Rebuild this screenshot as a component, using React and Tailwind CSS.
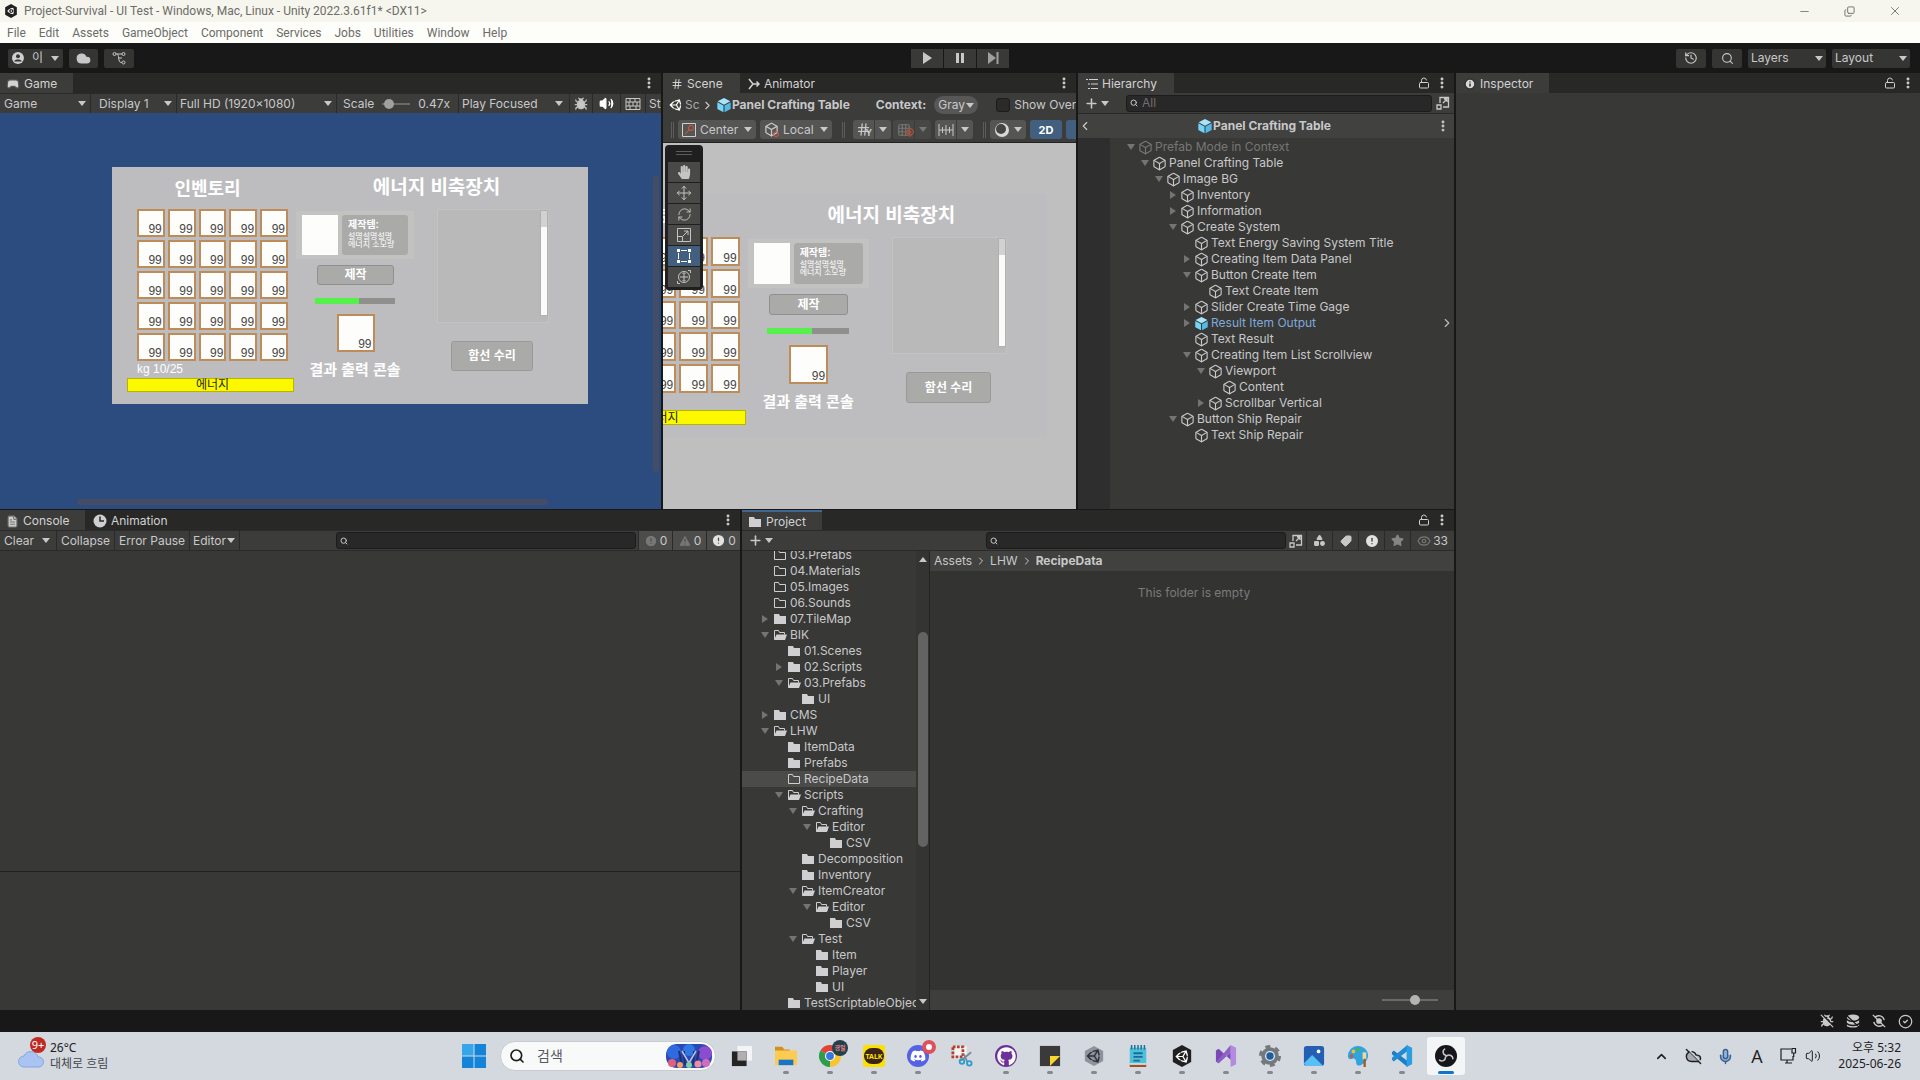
import {
  Box, Bug, BugOff, ChevronLeft, ChevronRight, ChevronUp, CircleAlert, CircleCheck, Cloud, CloudOff, Copy,
  EllipsisVertical, Eye, FileText, Gamepad2, Grid3x3, Hash, History, Info, LockOpen, Mic, Minus,
  Move, Plus, RefreshCw, Search, Shapes, Star, Tag, TriangleAlert, Volume2, X, Magnet,
} from 'lucide-react'
import { FaDiscord, FaGithub, FaHandPaper, FaUnity } from 'react-icons/fa'

const HIERARCHY = [
  [0, 'open', 'Prefab Mode in Context', 'dim'],
  [1, 'open', 'Panel Crafting Table'],
  [2, 'open', 'Image BG'],
  [3, 'closed', 'Inventory'],
  [3, 'closed', 'Information'],
  [3, 'open', 'Create System'],
  [4, '', 'Text Energy Saving System Title'],
  [4, 'closed', 'Creating Item Data Panel'],
  [4, 'open', 'Button Create Item'],
  [5, '', 'Text Create Item'],
  [4, 'closed', 'Slider Create Time Gage'],
  [4, 'closed', 'Result Item Output', 'prefab'],
  [4, '', 'Text Result'],
  [4, 'open', 'Creating Item List Scrollview'],
  [5, 'open', 'Viewport'],
  [6, '', 'Content'],
  [5, 'closed', 'Scrollbar Vertical'],
  [3, 'open', 'Button Ship Repair'],
  [4, '', 'Text Ship Repair'],
]

// [depth, arrow, folder kind, name]
const FOLDERS = [
  [0, '', 'empty', '03.Prefabs'],
  [0, '', 'empty', '04.Materials'],
  [0, '', 'empty', '05.Images'],
  [0, '', 'empty', '06.Sounds'],
  [0, 'closed', 'full', '07.TileMap'],
  [0, 'open', 'open', 'BIK'],
  [1, '', 'full', '01.Scenes'],
  [1, 'closed', 'full', '02.Scripts'],
  [1, 'open', 'open', '03.Prefabs'],
  [2, '', 'full', 'UI'],
  [0, 'closed', 'full', 'CMS'],
  [0, 'open', 'open', 'LHW'],
  [1, '', 'full', 'ItemData'],
  [1, '', 'full', 'Prefabs'],
  [1, '', 'empty', 'RecipeData'],
  [1, 'open', 'open', 'Scripts'],
  [2, 'open', 'open', 'Crafting'],
  [3, 'open', 'open', 'Editor'],
  [4, '', 'full', 'CSV'],
  [2, '', 'full', 'Decomposition'],
  [2, '', 'full', 'Inventory'],
  [2, 'open', 'open', 'ItemCreator'],
  [3, 'open', 'open', 'Editor'],
  [4, '', 'full', 'CSV'],
  [2, 'open', 'open', 'Test'],
  [3, '', 'full', 'Item'],
  [3, '', 'full', 'Player'],
  [3, '', 'full', 'UI'],
  [1, '', 'full', 'TestScriptableObjects'],
]

const MENUS = ['File', 'Edit', 'Assets', 'GameObject', 'Component', 'Services', 'Jobs', 'Utilities', 'Window', 'Help']

function Caret({ className = '' }) {
  return (
    <svg viewBox="0 0 8 5" className={`pointer-events-none h-[5px] w-2 shrink-0 ${className}`} fill="currentColor" aria-hidden>
      <path d="M0 0h8L4 5z" />
    </svg>
  )
}

function Dropdown({ label, value, className = '' }) {
  return (
    <label className={`flex h-full items-center ${className}`}>
      <select aria-label={label} className="min-w-0 flex-1 appearance-none bg-transparent p-0 outline-none">
        <option>{value}</option>
      </select>
      <Caret />
    </label>
  )
}

function Tab({ icon, children, active, className = '' }) {
  return (
    <button className={`flex h-full items-center gap-1 pt-0.5 whitespace-nowrap ${active ? 'bg-[#3c3c3a]' : ''} ${className}`}>
      {icon}
      {children}
    </button>
  )
}

function TabBar({ lock, children }) {
  return (
    <div className="flex h-5 shrink-0 items-center bg-[#282827] text-[#d2d2d2]">
      {children}
      <span className="flex-1" />
      {lock && (
        <button aria-label="Lock" className="mr-0.5 flex w-4 justify-center">
          <LockOpen size={12} />
        </button>
      )}
      <button aria-label="More" className="mr-1 flex w-4 justify-center">
        <EllipsisVertical size={14} strokeWidth={3} />
      </button>
    </div>
  )
}

function Arrow({ state }) {
  if (!state) return <span className="w-3 shrink-0" />
  return (
    <button aria-label={state === 'open' ? 'Collapse' : 'Expand'} className="flex w-3 shrink-0 justify-center text-[#747474]">
      <svg viewBox="0 0 8 8" className="size-2" fill="currentColor">
        <path d={state === 'open' ? 'M0 1h8L4 7z' : 'M1 0v8l6-4z'} />
      </svg>
    </button>
  )
}

function Cube({ solid, className = 'size-4' }) {
  if (!solid) return <Box className={`shrink-0 ${className}`} strokeWidth={1.8} />
  return (
    <svg viewBox="0 0 24 24" className={`shrink-0 ${className}`}>
      <path d="M12 1.500 21.500 6.500 12 11.500 2.500 6.500z" fill="#a5e6fb" />
      <path d="M2 8l9.200 4.800v10L2 18z" fill="#74d3f7" />
      <path d="M22 8l-9.200 4.800v10L22 18z" fill="#55b9e6" />
    </svg>
  )
}

function FolderIcon({ kind }) {
  return (
    <svg viewBox="0 0 14 12" className="h-3 w-3.5 shrink-0">
      {kind === 'full' && <path d="M1 1h5l1 2h6v8H1z" fill="#cfcfd2" />}
      {kind === 'empty' && <path d="M1.500 10.500v-9h4l1 2h6v7z" fill="none" stroke="#cfcfd2" />}
      {kind === 'open' && (
        <>
          <path d="M1.500 10.500v-9h4l1 2h5v2" fill="none" stroke="#cfcfd2" />
          <path d="M3.500 5.500H14L12 11H1z" fill="#cfcfd2" />
        </>
      )}
    </svg>
  )
}

function SearchField({ label, placeholder, className = '' }) {
  return (
    <label className={`flex h-[17px] items-center gap-1 rounded-[3px] border border-[#1c1c1c] bg-[#282828] px-[3px] ${className}`}>
      <Search size={8} strokeWidth={3} className="shrink-0" />
      <input aria-label={label} placeholder={placeholder} className="min-w-0 flex-1 bg-transparent outline-none placeholder:text-[#6f6f6f]" />
    </label>
  )
}

/* ---------- in-game crafting UI, shown by both Game and Scene views ---------- */

function Slot() {
  return (
    <div className="flex min-h-0 items-end justify-end overflow-hidden border-2 border-[#bd8c58] bg-[#fdfdfb] pr-px text-xs leading-3 text-[#484848]">
      99
    </div>
  )
}

function CraftingPanel({ className = '' }) {
  return (
    <div
      className={`grid grid-cols-[15fr_167fr_2fr_118fr_23fr_112fr_39fr] grid-rows-[42fr_195fr] font-['Liberation_Sans','Noto_Sans_CJK_KR',sans-serif] text-white ${className}`}
    >
      <h2 className="col-start-2 flex min-h-0 items-center justify-center pt-0.5 pr-1.5 text-lg leading-5 font-bold">인벤토리</h2>
      <h2 className="col-start-4 col-end-7 flex min-h-0 items-center justify-center pl-7 text-[19px] leading-5 font-bold">에너지 비축장치</h2>

      <div className="col-start-2 row-start-2 grid min-h-0 grid-rows-[152fr_17fr_14fr_12fr]">
        <div className="mr-1.5 ml-2.5 grid min-h-0 grid-cols-5 grid-rows-5 gap-x-[3px] gap-y-[3px]">
          {Array.from({ length: 25 }, (_, i) => <Slot key={i} />)}
        </div>
        <p className="ml-2.5 min-h-0 text-xs leading-4">kg 10/25</p>
        <div className="flex min-h-0 items-center justify-center border border-[#b9b400] bg-[#fbf800] pl-1 text-xs leading-3 text-[#26261a]">
          에너지
        </div>
      </div>

      <div className="col-start-4 row-start-2 grid min-h-0 grid-cols-[18fr_4fr_15fr_60fr_2fr_19fr] grid-rows-[2fr_48fr_6fr_20fr_13fr_6fr_10fr_38fr_8fr_20fr_24fr]">
        <div className="col-span-6 row-start-2 flex min-h-0 gap-1 bg-[#c2c2c1] px-1.5 py-1">
          <div className="w-9 bg-[#fdfdfb]" />
          <div className="flex-1 overflow-hidden rounded-[3px] bg-[#aaaaa8] px-1.5 pt-1">
            <p className="text-[10px] leading-3 font-bold">제작템:</p>
            <p className="mt-0.5 text-[8px] leading-[8px]">설명설명설명</p>
            <p className="text-[8px] leading-[8px] whitespace-nowrap">에너지 소모량</p>
          </div>
        </div>
        <button className="col-start-2 col-end-6 row-start-4 mr-px ml-[3px] min-h-0 rounded-[3px] border border-[#8f8f8d] bg-[#aaaaa8] text-xs leading-4 font-bold">
          제작
        </button>
        <div className="col-start-2 col-end-6 row-start-6 ml-px min-h-0 bg-[#8f8f8d]">
          <div className="h-full w-[55%] bg-[#55f04c]" />
        </div>
        <div className="col-start-3 col-end-5 row-start-8 mx-auto grid aspect-square h-full min-h-0">
          <Slot />
        </div>
        <p className="col-span-6 row-start-10 min-h-0 text-center text-[15px] leading-5 font-bold">결과 출력 콘솔</p>
      </div>

      <div className="col-start-6 row-start-2 grid min-h-0 grid-rows-[114fr_18fr_30fr_33fr]">
        <div className="flex min-h-0 justify-end border border-[#c3c3c2] bg-[#b9b9ba]">
          <div className="mb-1.5 flex w-2 flex-col border border-[#b0b0ae] bg-[#d2d2d2]">
            <div className="mt-4 flex-1 bg-[#fbfbf9]" />
          </div>
        </div>
        <button className="row-start-3 mr-4 ml-3.5 min-h-0 rounded-[3px] border border-[#999997] bg-[#aaaaa8] text-xs leading-4 font-bold">
          함선 수리
        </button>
      </div>
    </div>
  )
}

/* ---------- editor windows ---------- */

function GameWindow() {
  return (
    <section className="flex min-h-0 min-w-0 flex-col overflow-hidden bg-[#3c3c3a]">
      <TabBar>
        <Tab active icon={<Gamepad2 size={14} fill="currentColor" stroke="#555" />} className="w-[73px] px-1.5">Game</Tab>
      </TabBar>
      <div className="flex h-5 shrink-0 items-center border-t border-[#2a2a2a] whitespace-nowrap *:shrink-0">
        <Dropdown label="View" value="Game" className="w-[91px] border-r border-[#2a2a2a] pr-1 pl-1" />
        <Dropdown label="Display" value="Display 1" className="w-[86px] border-r border-[#2a2a2a] pr-1 pl-2" />
        <Dropdown label="Resolution" value="Full HD (1920x1080)" className="w-40 border-r border-[#2a2a2a] pr-1 pl-[3px]" />
        <label className="flex h-full w-[122px] items-center gap-2 border-r border-[#2a2a2a] pl-1.5">
          Scale
          <input
            type="range"
            defaultValue={8}
            className="h-0.5 w-7 appearance-none bg-[#6a6a6a] [&::-webkit-slider-thumb]:size-2.5 [&::-webkit-slider-thumb]:appearance-none [&::-webkit-slider-thumb]:rounded-full [&::-webkit-slider-thumb]:bg-[#a0a0a0]"
          />
          <output>0.47x</output>
        </label>
        <Dropdown label="Play mode" value="Play Focused" className="w-[110px] pr-1.5 pl-[3px]" />
        <button aria-label="Debug" className="flex h-full w-6 items-center justify-center border-x border-[#2a2a2a]"><Bug size={14} fill="currentColor" stroke="#bdbdbd" /></button>
        <button aria-label="Mute" className="flex h-full w-7 items-center justify-center border-r border-[#2a2a2a]"><Volume2 size={15} fill="#fff" stroke="#fff" /></button>
        <button aria-label="Shortcuts" className="flex h-full w-6 items-center justify-center">
          <svg viewBox="0 0 16 12" className="h-3 w-4" fill="none" stroke="currentColor">
            <path d="M1 .5h14v11H1zM1 4h14M1 8h14M5 0v4M10 0v4M4 4v4M8 4v4M12 4v4M5 8v4M11 8v4" />
          </svg>
        </button>
        <button className="h-full border-l border-[#2a2a2a] pl-[3px]">Stats</button>
      </div>
      <div className="relative min-h-0 flex-1 overflow-hidden bg-[#2c4c7f]">
        <CraftingPanel className="absolute top-[54px] left-28 h-[237px] w-[476px] bg-[#bdbdbf]" />
        <div className="absolute top-[62px] right-0.5 h-[297px] w-1.5 rounded-full bg-[#434d66]" />
        <div className="absolute bottom-1 left-[77px] h-1.5 w-[471px] rounded-full bg-[#434d66]" />
      </div>
    </section>
  )
}

const TOOLS = [
  ['Hand', <FaHandPaper size={14} />],
  ['Move', <Move size={16} strokeWidth={1.5} />],
  ['Rotate', <RefreshCw size={15} strokeWidth={1.5} />],
  ['Scale', (
    <svg viewBox="0 0 16 16" className="size-4" stroke="currentColor" fill="none">
      <path d="M1.500 1.500h13v13h-13zM1.500 9.500h5v5M7 9l5-5M8 4h4v4" />
    </svg>
  )],
  ['Rect', (
    <svg viewBox="0 0 16 16" className="size-4" stroke="currentColor" fill="#fff">
      <path d="M5 2.500h6M5 13.500h6M2.500 5v6M13.500 5v6" />
      <path d="M1 1h3v3H1zM12 1h3v3h-3zM1 12h3v3H1zM12 12h3v3h-3z" stroke="none" />
    </svg>
  )],
  ['Transform', (
    <svg viewBox="0 0 16 16" className="size-4" stroke="currentColor" fill="none">
      <circle cx="8" cy="8" r="5.500" />
      <path d="M8 4v8M4 8h8M6.500 5 8 3.500 9.500 5M6.500 11 8 12.500 9.500 11M12 1.500h2.500V4M4 14.500H1.500V12" />
    </svg>
  )],
]

function Grip() {
  return <span className="h-4 w-[3px] shrink-0 border-x border-[#5c5c5c]" />
}

function SceneWindow() {
  return (
    <section className="flex min-h-0 min-w-0 flex-col overflow-hidden bg-[#3c3c3a]">
      <TabBar>
        <Tab active icon={<Hash size={12} />} className="w-[77px] gap-1 px-2">Scene</Tab>
        <Tab
          icon={
            <svg viewBox="0 0 12 12" className="size-3" fill="none" stroke="currentColor" strokeWidth="1.500">
              <path d="M1 1l4 5-4 5M5 6h6M8.500 3.500 11 6 8.500 8.500" />
            </svg>
          }
          className="px-2"
        >
          Animator
        </Tab>
      </TabBar>
      <div className="flex h-6 shrink-0 items-center whitespace-nowrap *:shrink-0">
        <FaUnity size={14} className="ml-1.5 text-white" />
        <a href="#scene" className="ml-0.5 w-4 overflow-hidden text-[#a8a8a8]">Sc</a>
        <ChevronRight size={13} />
        <Cube solid className="ml-0.5 size-4" />
        <a href="#prefab" className="font-bold">Panel Crafting Table</a>
        <span className="ml-[26px] font-bold">Context:</span>
        <Dropdown label="Context" value="Gray" className="ml-2 max-h-[18px] w-11 rounded-full bg-[#575757] px-1" />
        <label className="ml-[18px] flex items-center gap-1">
          <input type="checkbox" className="size-3.5 appearance-none rounded-[3px] border border-[#1c1c1c] bg-[#2a2a2a]" />
          Show Overrides
        </label>
      </div>
      <div className="flex h-[26px] shrink-0 items-center overflow-hidden border-b border-[#222] pl-2 whitespace-nowrap *:shrink-0">
        <Grip />
        <label className="ml-1 flex h-[19px] w-[78px] items-center gap-1 rounded-[3px] bg-[#555553] px-1">
          <svg viewBox="0 0 14 14" className="size-3.5" fill="none" stroke="#d0d0d0">
            <path d="M.5.5h13v13H.5z" />
            <path d="M3 11l5-5" stroke="#d65a3c" />
            <circle cx="9" cy="5" r="2.500" stroke="#d65a3c" />
          </svg>
          <Dropdown label="Pivot" value="Center" className="flex-1" />
        </label>
        <label className="ml-1 flex h-[19px] w-[72px] items-center gap-1 rounded-[3px] bg-[#555553] px-1">
          <span className="relative">
            <Box size={15} />
            <span className="absolute right-0 bottom-0 size-1.5 rounded-full border border-[#d65a3c]" />
          </span>
          <Dropdown label="Handle rotation" value="Local" className="flex-1" />
        </label>
        <span className="w-2.5" />
        <Grip />
        <div className="ml-2 flex h-[19px] gap-px *:flex *:items-center *:justify-center *:bg-[#555553]">
          <button aria-label="Grid" className="relative w-[21px] rounded-l-[3px]">
            <Hash size={15} />
            <b className="absolute right-0.5 bottom-0 text-[9px] leading-3">Y</b>
          </button>
          <button aria-label="Grid options" className="w-4 rounded-r-[3px]"><Caret /></button>
        </div>
        <div className="ml-0.5 flex h-[19px] gap-px text-[#777] *:flex *:items-center *:justify-center *:bg-[#474745]">
          <button aria-label="Snap" className="relative w-[21px] rounded-l-[3px]">
            <Grid3x3 size={14} />
            <Magnet size={9} strokeWidth={3} className="absolute right-0 bottom-0.5 text-[#a4523c]" />
          </button>
          <button aria-label="Snap options" className="w-4 rounded-r-[3px]"><Caret /></button>
        </div>
        <div className="ml-1 flex h-[19px] gap-px *:flex *:items-center *:justify-center *:bg-[#555553]">
          <button aria-label="Increment" className="w-[21px] rounded-l-[3px]">
            <svg viewBox="0 0 16 12" className="h-3 w-4" fill="none" stroke="currentColor">
              <path d="M1 0v12M15 0v12M1 6h14M4.500 3v6M8 1v10M11.500 3v6" />
            </svg>
          </button>
          <button aria-label="Increment options" className="w-4 rounded-r-[3px]"><Caret /></button>
        </div>
        <span className="w-2.5" />
        <Grip />
        <div className="ml-1 flex h-[19px] w-[36px] items-center justify-center gap-1 rounded-[3px] bg-[#555553]">
          <svg viewBox="0 0 16 16" className="size-4">
            <circle cx="8" cy="8" r="7" fill="#d8d8d8" />
            <circle cx="7" cy="7" r="5" fill="#444" />
          </svg>
          <Caret />
        </div>
        <button className="ml-1 h-[19px] w-8 rounded-[3px] bg-[#425f80] text-[11px] font-bold text-white">2D</button>
        <button aria-label="Lighting" className="ml-1 h-[19px] w-8 rounded-[3px] bg-[#425f80]" />
      </div>
      <div className="relative min-h-0 flex-1 overflow-hidden bg-[#bfbfbf]">
        <CraftingPanel className="absolute top-[51px] left-[-104px] h-[243px] w-[488px] bg-[#bdbdbf]" />
        <div className="absolute top-0.5 left-0.5 flex w-[38px] flex-col gap-px rounded-[4px] bg-[#1f1f1f] p-[3px] pt-0">
          <div className="mx-auto my-1.5 h-1 w-4 border-y border-[#5c5c5c]" />
          {TOOLS.map(([name, icon]) => (
            <button
              key={name}
              aria-label={name}
              className={`flex h-5 items-center justify-center ${name === 'Rect' ? 'bg-[#425f80] text-white' : 'bg-[#494947] text-[#c4c4c4]'}`}
            >
              {icon}
            </button>
          ))}
        </div>
      </div>
    </section>
  )
}

function ExpandIcon() {
  return (
    <svg viewBox="0 0 14 14" className="size-3.5 shrink-0" fill="none" stroke="currentColor" strokeWidth="1.300">
      <path d="M4 7V1.500h8.500V11H7M7 7l4-4M8 3h3v3M1 9h4v4H1z" />
    </svg>
  )
}

function HierarchyWindow() {
  return (
    <section className="flex min-h-0 min-w-0 flex-col overflow-hidden bg-[#383836]">
      <TabBar lock>
        <Tab
          active
          icon={
            <svg viewBox="0 0 12 12" className="size-3" stroke="currentColor" strokeWidth="1.200">
              <path d="M0 1.500h2M3 1.500h9M2 6h2M5 6h7M2 10.500h2M5 10.500h7" />
            </svg>
          }
          className="w-24 px-2"
        >
          Hierarchy
        </Tab>
      </TabBar>
      <div className="flex h-5 shrink-0 items-center bg-[#3c3c3a] pr-1">
        <button aria-label="Create" className="flex w-12 items-center gap-0.5 pl-1.5"><Plus size={15} strokeWidth={2.5} /><Caret /></button>
        <SearchField label="Search hierarchy" placeholder="All" className="mr-1 flex-1" />
        <ExpandIcon />
      </div>
      <div className="flex h-[25px] shrink-0 items-center border-t border-[#2a2a2a] bg-[#414140] pr-1">
        <button aria-label="Back"><ChevronLeft size={14} /></button>
        <div className="flex flex-1 items-center justify-center font-bold"><Cube solid />Panel Crafting Table</div>
        <button aria-label="Prefab options"><EllipsisVertical size={14} strokeWidth={3} /></button>
      </div>
      <div className="flex min-h-0 flex-1">
        <div className="w-8 bg-[#2e2e2e]" />
        <ul className="min-w-0 flex-1 pt-px pl-[15px]">
          {HIERARCHY.map(([depth, arrow, name, kind], i) => (
            <li
              key={i}
              className={`flex h-4 items-center whitespace-nowrap ${kind === 'dim' ? 'text-[#777776]' : kind === 'prefab' ? 'text-[#7faadb]' : ''}`}
              style={{ paddingLeft: depth * 14 }}
            >
              <Arrow state={arrow} />
              <Cube solid={kind === 'prefab'} className="mx-px size-[15px]" />
              <span className="ml-px">{name}</span>
              {kind === 'prefab' && <ChevronRight size={14} className="ml-auto text-[#bdbdbd]" />}
            </li>
          ))}
        </ul>
      </div>
    </section>
  )
}

function ConsoleWindow() {
  return (
    <section className="flex min-h-0 min-w-0 flex-col overflow-hidden bg-[#383836]">
      <TabBar>
        <Tab active icon={<FileText size={13} fill="#ccc" stroke="#777" />} className="w-[85px] px-1.5">Console</Tab>
        <Tab
          icon={
            <svg viewBox="0 0 14 14" className="size-3.5">
              <circle cx="7" cy="7" r="6.500" fill="#cfcfd2" />
              <path d="M7 2.500V7h4" fill="none" stroke="#282828" strokeWidth="1.500" />
            </svg>
          }
          className="px-2"
        >
          Animation
        </Tab>
      </TabBar>
      <div className="flex h-[21px] shrink-0 items-center border-y border-[#2a2a2a] bg-[#3c3c3a] whitespace-nowrap *:h-full">
        <Dropdown label="Clear" value="Clear" className="w-[57px] border-r border-[#2a2a2a] pr-1.5 pl-1" />
        <button className="w-[58px] border-r border-[#2a2a2a]">Collapse</button>
        <button className="w-[75px] border-r border-[#2a2a2a]">Error Pause</button>
        <Dropdown label="Target" value="Editor" className="w-[50px] border-r border-[#2a2a2a] pr-1 pl-[3px]" />
        <div className="flex flex-1 items-center justify-end pr-0.5">
          <SearchField label="Search console" className="w-[300px]" />
        </div>
        {[
          ['Logs', <CircleAlert size={14} fill="#777" stroke="#4c4c4a" />],
          ['Warnings', <TriangleAlert size={14} fill="#777" stroke="#4c4c4a" />],
          ['Errors', <CircleAlert size={15} fill="#e2e2e2" stroke="#4c4c4a" />],
        ].map(([name, icon]) => (
          <button key={name} aria-label={name} className="flex w-[34px] items-center justify-center gap-0.5 border-l border-[#2a2a2a] bg-[#4c4c4a]">
            {icon}0
          </button>
        ))}
      </div>
      <div className="flex-[320]" />
      <div className="flex-[138] border-t border-[#222]" />
    </section>
  )
}

function ProjectWindow() {
  return (
    <section className="flex min-h-0 min-w-0 flex-col overflow-hidden bg-[#383836]">
      <TabBar lock>
        <Tab active icon={<FolderIcon kind="full" />} className="w-20 border-t-2 border-[#3f6690] px-1.5">Project</Tab>
      </TabBar>
      <div className="flex h-[21px] shrink-0 items-center border-y border-[#2a2a2a] bg-[#3c3c3a] pr-1.5">
        <button aria-label="Create" className="flex w-12 items-center gap-0.5 pl-1.5"><Plus size={15} strokeWidth={2.5} /><Caret /></button>
        <span className="flex-1" />
        <SearchField label="Search project" className="w-[300px]" />
        <button aria-label="Open search" className="flex w-5 justify-center"><ExpandIcon /></button>
        <div className="flex h-full *:flex *:h-full *:w-[26px] *:items-center *:justify-center *:border-l *:border-[#2a2a2a]">
          <button aria-label="Filter by type"><Shapes size={13} fill="currentColor" /></button>
          <button aria-label="Filter by label"><Tag size={12} fill="currentColor" className="-scale-x-100" /></button>
          <button aria-label="Filter by log"><CircleAlert size={16} fill="#e2e2e2" stroke="#3c3c3a" /></button>
          <button aria-label="Favorites"><Star size={13} fill="#858585" stroke="#858585" /></button>
        </div>
        <button className="flex h-full items-center gap-0.5 border-l border-[#2a2a2a] pl-1.5"><Eye size={14} className="text-[#777]" />33</button>
      </div>
      <div className="flex min-h-0 flex-1">
        <div className="flex w-[188px] min-w-0 shrink-0 border-r border-[#222]">
          <div className="flex min-w-0 flex-1 flex-col justify-end overflow-hidden">
            <ul className="-mb-px">
              {FOLDERS.map(([depth, arrow, kind, name], i) => (
                <li
                  key={i}
                  className={`flex h-4 items-center whitespace-nowrap ${name === 'RecipeData' ? 'bg-[#4b4b49]' : ''}`}
                  style={{ paddingLeft: 17 + depth * 14 }}
                >
                  <Arrow state={arrow} />
                  <span className="mr-[3px] ml-0.5"><FolderIcon kind={kind} /></span>
                  {name}
                </li>
              ))}
            </ul>
          </div>
          <div className="flex w-[13px] flex-col items-center bg-[#343433] py-1.5">
            <Caret className="rotate-180" />
            <div className="flex-[70]" />
            <div className="w-2.5 flex-[216] rounded-full bg-[#636363]" />
            <div className="flex-[152]" />
            <Caret />
          </div>
        </div>
        <div className="flex min-w-0 flex-1 flex-col bg-[#333332]">
          <nav className="flex h-5 items-center gap-[3px] bg-[#41413f] px-1">
            <a href="#assets">Assets</a>
            <ChevronRight size={12} />
            <a href="#lhw">LHW</a>
            <ChevronRight size={12} />
            <a href="#recipe" className="font-bold">RecipeData</a>
          </nav>
          <p className="mt-3.5 flex-1 pl-1 text-center text-[#7b7b7a]">This folder is empty</p>
          <div className="flex h-5 items-center justify-end bg-[#3e3e3c] pr-4">
            <input
              type="range"
              aria-label="Icon size"
              defaultValue={60}
              className="h-0.5 w-[56px] appearance-none bg-[#6a6a6a] [&::-webkit-slider-thumb]:size-2.5 [&::-webkit-slider-thumb]:appearance-none [&::-webkit-slider-thumb]:rounded-full [&::-webkit-slider-thumb]:bg-[#b4b4b4]"
            />
          </div>
        </div>
      </div>
    </section>
  )
}

function InspectorWindow() {
  return (
    <section className="flex min-h-0 min-w-0 flex-col overflow-hidden bg-[#383836]">
      <TabBar lock>
        <Tab active icon={<Info size={12} fill="#d8d8d8" stroke="#333" strokeWidth={3} />} className="w-[93px] px-2">Inspector</Tab>
      </TabBar>
    </section>
  )
}

/* ---------- taskbar drawings ---------- */

const ICONS = {
  taskview: (
    <svg viewBox="0 0 24 24"><path d="M7 1h16v16H7z" fill="#f4f4f4" /><path d="M1 7h16v16H1z" fill="#242424" /><path d="M7 7h10v10H7z" fill="#b0b0b4" /></svg>
  ),
  folder: (
    <svg viewBox="0 0 24 24"><path d="M0 2h8l2 3h6v6H0z" fill="#d68f1c" /><path d="M0 6h24v16H0z" fill="#fbcb52" /><path d="M4 16h16v6H4z" fill="#1775c9" /></svg>
  ),
  chrome: (
    <svg viewBox="0 0 24 24">
      <path d="M12 12 1.600 6A12 12 0 0 1 22.400 6z" fill="#e04434" />
      <path d="M12 12 22.400 6A12 12 0 0 1 12 24z" fill="#f8c52c" />
      <path d="M12 12v12A12 12 0 0 1 1.600 6z" fill="#2f9c4c" />
      <circle cx="12" cy="12" r="5.500" fill="#fff" /><circle cx="12" cy="12" r="4.300" fill="#3478e0" />
    </svg>
  ),
  talk: (
    <span className="flex items-center justify-center rounded-[3px] bg-[#fbe000]">
      <span className="flex h-4 w-5 items-center justify-center rounded-full bg-[#3c2418] text-[7px] leading-none font-bold text-[#fbe000]">TALK</span>
    </span>
  ),
  discord: <span className="flex items-center justify-center rounded-full bg-[#5562e4] text-white"><FaDiscord className="size-4" /></span>,
  snip: (
    <svg viewBox="0 0 24 24" fill="none">
      <path d="M4 1h13v14H4z" fill="#f4f4f4" /><path d="M2 2h11v11H2z" stroke="#b4402c" strokeWidth="3" strokeDasharray="3 1.500" />
      <path d="M22 8 11 17M14 10l4 9" stroke="#7b8a98" strokeWidth="2" />
      <circle cx="12" cy="18" r="2.500" stroke="#2f9cd0" strokeWidth="2" /><circle cx="20" cy="20" r="2.500" stroke="#2f9cd0" strokeWidth="2" />
    </svg>
  ),
  github: <span className="flex items-center justify-center rounded-full bg-[#6f2f9a] text-white"><FaGithub className="size-[19px]" /></span>,
  notes: (
    <svg viewBox="0 0 24 24"><path d="M1 1h22v22H1z" fill="#3a3a3a" /><path d="M12 23V12h11z" fill="#fbd72c" /></svg>
  ),
  hub: (
    <span className="relative flex items-center justify-center">
      <svg viewBox="0 0 24 24" className="absolute inset-0"><path d="M12 1l10 5.500v11L12 23 2 17.500v-11z" fill="#8d949e" /></svg>
      <FaUnity className="relative size-4 text-[#2c3038]" />
    </span>
  ),
  notepad: (
    <svg viewBox="0 0 24 24">
      <path d="M3 3h18v18H3z" fill="#50bfdc" /><path d="M3 21h18v3H3z" fill="#a05024" /><path d="M3 20h18v1.500H3z" fill="#f0f0f0" />
      <path d="M5 0v5M8.500 0v5M12 0v5M15.500 0v5M19 0v5" stroke="#1f6e94" strokeWidth="1.600" /><path d="M7 9h10M7 13h10M7 17h7" stroke="#1c6d93" strokeWidth="2" />
    </svg>
  ),
  unity: (
    <span className="relative flex items-center justify-center">
      <svg viewBox="0 0 24 24" className="absolute inset-0"><path d="M12 0l10 5.500v13L12 24 2 18.500v-13z" fill="#202020" /></svg>
      <FaUnity className="relative size-[15px] text-white" />
    </span>
  ),
  vs: (
    <svg viewBox="0 0 24 24">
      <path d="M17 0l6 3v18l-6 3z" fill="#b48ae0" /><path d="M1 6l3-2 13 12V8L4 20l-3-2z" fill="#7a48b4" /><path d="M17 0v8L7 16l-3 4-3-2 2-1z" fill="#8f5fc8" />
    </svg>
  ),
  settings: (
    <svg viewBox="0 0 24 24">
      <circle cx="12" cy="12" r="9.500" fill="#74797e" />
      <circle cx="12" cy="12" r="10" fill="none" stroke="#74797e" strokeWidth="4" strokeDasharray="5.200 5.270" />
      <circle cx="12" cy="12" r="5.500" fill="#d8e4ee" /><circle cx="12" cy="12" r="4" fill="#1c5d9c" />
    </svg>
  ),
  photos: (
    <svg viewBox="0 0 24 24"><rect x="1" y="1" width="22" height="22" rx="3" fill="#255fb4" /><path d="M1 20l9-9 12 12H3z" fill="#58c0f4" /><circle cx="17" cy="7" r="2" fill="#fff" /></svg>
  ),
  paint: (
    <svg viewBox="0 0 24 24">
      <path d="M12 1C5 1 1 7 1 12c0 4 3 4 5 3s4 1 4 4 2 4 5 3c5-2 8-6 8-11S18 1 12 1z" fill="#30a4dc" />
      <circle cx="7" cy="7" r="2" fill="#f0c030" /><circle cx="12" cy="5" r="2" fill="#50b050" /><circle cx="5" cy="12" r="1.800" fill="#e05030" />
      <path d="M17 8h4v8h-4z" fill="#f0d8a0" /><path d="M18 15h2.500v9H18z" fill="#9c5c28" />
    </svg>
  ),
  vscode: (
    <svg viewBox="0 0 24 24">
      <path d="M1 8l2-2 15 11.500V24L1 10z" fill="#1b7fc4" /><path d="M1 16l2 2L18 6.500V0L1 14z" fill="#1f8bd2" />
      <path d="M17 0l6 3v18l-6 3z" fill="#2c9fe4" />
    </svg>
  ),
  obs: (
    <svg viewBox="0 0 24 24" fill="none" stroke="#c8c8cc" strokeWidth="1.700" strokeLinecap="round">
      <circle cx="12" cy="12" r="12" fill="#17171b" stroke="none" />
      <path d="M12 11.500C8 10 8 6 10.500 4.500M12.500 12c3.500-2.500 7 0 7 3M11.500 13c0 4-4 5.500-6.500 3.500" />
    </svg>
  ),
}

const APPS = [
  ['taskview', '작업 보기', false], ['folder', '파일 탐색기', true], ['chrome', 'Chrome', true], ['talk', 'KakaoTalk', true],
  ['discord', 'Discord', true], ['snip', '캡처 도구', false], ['github', 'GitHub Desktop', true], ['notes', '스티커 메모', true],
  ['hub', 'Unity Hub', true], ['notepad', '메모장', true], ['unity', 'Unity', true], ['vs', 'Visual Studio', true],
  ['settings', '설정', true], ['photos', '사진', true], ['paint', '그림판', true], ['vscode', 'VS Code', true], ['obs', 'OBS Studio', true],
]

function Taskbar() {
  return (
    <footer className="grid h-12 shrink-0 grid-cols-[1fr_auto_1fr] items-center bg-[#d4d8df] font-['Noto_Sans','Noto_Sans_CJK_KR',sans-serif] text-xs text-[#1e1e22]">
      <button className="flex items-center gap-1.5 pl-[18px] text-left">
        <span className="relative">
          <svg viewBox="0 0 26 26" className="size-[26px]">
            <path d="M6 24a5.500 5.500 0 0 1 0-11 7.500 7.500 0 0 1 14 1 5 5 0 0 1 1 10z" fill="#a9c4f2" stroke="#86a6dc" />
          </svg>
          <span className="absolute -top-1.5 -right-0.5 flex size-4 items-center justify-center rounded-full bg-[#c02a24] text-[11px] text-white">9+</span>
        </span>
        <span className="leading-4">
          <span className="block">26°C</span>
          <span className="block text-[#44464c]">대체로 흐림</span>
        </span>
      </button>
      <div className="flex items-center">
        <button aria-label="시작" className="flex size-11 items-center justify-center">
          <svg viewBox="0 0 24 24" className="size-6" fill="#1484d8">
            <path d="M0 0h11.500v11.500H0z" fill="#35a6ea" /><path d="M12.500 0H24v11.500H12.500zM0 12.500h11.500V24H0zM12.500 12.500H24V24H12.500z" />
          </svg>
        </button>
        <label className="mx-1 flex h-[30px] w-[216px] items-center rounded-full border border-[#c8ccd2] bg-[#f8fafa] pr-0.5 pl-2">
          <Search size={16} strokeWidth={2.5} />
          <input aria-label="검색" placeholder="검색" className="ml-3 min-w-0 flex-1 bg-transparent text-sm outline-none placeholder:text-[#55585e]" />
          <svg viewBox="0 0 48 26" className="h-[26px] w-12">
            <rect x="1" y="1" width="46" height="24" rx="11" fill="#2c48b4" />
            <circle cx="9" cy="9" r="7" fill="#2f6ae0" /><circle cx="24" cy="7" r="6" fill="#3078e4" /><circle cx="40" cy="10" r="7" fill="#8c4cd0" />
            <path d="M14 8l3 14M19 8l1 14M29 8l-1 14M34 8l-3 14" fill="none" stroke="#20306c" strokeWidth="2" />
            <path d="M17 8l7 12 7-12" fill="none" stroke="#b8c4ec" strokeWidth="1.500" />
            <circle cx="7" cy="20" r="4" fill="#e0607c" /><circle cx="15" cy="22" r="3" fill="#f0a060" /><circle cx="24" cy="22" r="3" fill="#80d0a0" />
            <circle cx="33" cy="21" r="3.500" fill="#f08ca0" /><circle cx="41" cy="20" r="4" fill="#d06cc0" />
          </svg>
        </label>
        {APPS.map(([id, name, running]) => (
          <button key={id} aria-label={name} className="relative flex h-12 w-11 items-center justify-center">
            <span className={`flex h-[38px] w-[38px] items-center justify-center rounded-[3px] *:size-[22px] ${id === 'obs' ? 'bg-[#f3f5f6]' : ''}`}>{ICONS[id]}</span>
            {id === 'chrome' && <span className="absolute top-2 right-1 flex size-4 items-center justify-center rounded-full bg-[#24404c] text-[6px] font-bold text-[#e88]">경일</span>}
            {id === 'discord' && <span className="absolute top-2 right-1 flex size-3.5 rounded-full border-4 border-[#e0505a] bg-white" />}
            {running && <span className={`absolute bottom-1.5 h-[3px] rounded-full ${id === 'obs' ? 'w-4 bg-[#0f74cc]' : 'w-1.5 bg-[#85888c]'}`} />}
          </button>
        ))}
      </div>
      <div className="flex items-center justify-end pr-[19px] *:shrink-0">
        <button aria-label="숨겨진 아이콘 표시" className="flex w-8 justify-center"><ChevronUp size={15} strokeWidth={2.5} /></button>
        <button aria-label="OneDrive" className="flex w-8 justify-center"><CloudOff size={17} fill="#a8acb2" /></button>
        <button aria-label="마이크" className="flex w-8 justify-center"><Mic size={17} fill="#8fb4dc" stroke="#3c5c8c" /></button>
        <button aria-label="입력 언어" className="w-8 font-['Open_Sans',sans-serif] text-lg leading-5">A</button>
        <button aria-label="네트워크" className="flex w-[30px] justify-center">
          <svg viewBox="0 0 18 18" className="size-[18px]" fill="none" stroke="currentColor" strokeWidth="1.200">
            <path d="M12 2H2v11h12V9M6 16h7M8 13v3M13 1.500h3.500V6H13zM14.700 6v4" />
          </svg>
        </button>
        <button aria-label="볼륨" className="flex w-5 justify-center"><Volume2 size={16} strokeWidth={1.5} /></button>
        <time className="w-[78px] text-right leading-4">오후 5:32<br />2025-06-26</time>
      </div>
    </footer>
  )
}

export default function App() {
  return (
    <div className="flex h-screen flex-col overflow-hidden bg-[#181818] font-['Inter','Noto_Sans_CJK_KR',sans-serif] text-xs leading-4 text-[#c8c8ca]">
      <header className="shrink-0 bg-[#fdfdfa] font-['Roboto','Noto_Sans',sans-serif] text-[#6c6c68]">
        <div className="flex h-[22px] items-center bg-[#f6f6ee] pl-1">
          <span className="relative mr-1.5 flex size-3.5 items-center justify-center">
            <svg viewBox="0 0 24 24" className="absolute inset-0"><path d="M12 0l10 5.500v13L12 24 2 18.500v-13z" fill="#202020" /></svg>
            <FaUnity className="relative size-2 text-white" />
          </span>
          <h1 className="flex-1">Project-Survival - UI Test - Windows, Mac, Linux - Unity 2022.3.61f1* &lt;DX11&gt;</h1>
          <button aria-label="Minimize" className="flex w-[45px] justify-center"><Minus size={13} strokeWidth={1.5} /></button>
          <button aria-label="Restore" className="flex w-[45px] justify-center"><Copy size={11} strokeWidth={2} className="-scale-x-100 rotate-180" /></button>
          <button aria-label="Close" className="mr-0.5 flex w-[46px] justify-center"><X size={14} strokeWidth={1.5} /></button>
        </div>
        <nav className="flex h-[21px] items-center gap-[13px] pl-[7px]">
          {MENUS.map((m) => <button key={m}>{m}</button>)}
        </nav>
      </header>

      <div className="grid h-[30px] shrink-0 grid-cols-[1fr_auto_1fr] items-center bg-[#181818]">
        <div className="flex gap-1.5 pl-2 *:h-[19px] *:rounded-[2px] *:bg-[#353533]">
          <button className="flex w-[55px] items-center gap-2 px-1">
            <svg viewBox="0 0 14 14" className="size-3.5">
              <circle cx="7" cy="7" r="7" fill="#cfcfd2" /><circle cx="7" cy="5" r="2.300" fill="#353533" /><path d="M2.500 11c1-3 8-3 9 0z" fill="#353533" />
            </svg>
            이
            <Caret className="ml-auto" />
          </button>
          <button aria-label="Cloud" className="flex w-[29px] items-center justify-center"><Cloud size={15} fill="currentColor" /></button>
          <button aria-label="Version control" className="flex w-[30px] items-center justify-center">
            <svg viewBox="0 0 14 14" className="size-3.5" fill="none" stroke="currentColor">
              <circle cx="2.500" cy="3" r="1.500" /><circle cx="11.500" cy="3" r="1.500" /><circle cx="11.500" cy="11.500" r="1.500" />
              <path d="M4 3h6M5 3c1.500 0 1.500 4 2 6s1 2.500 3 2.500M6 7h4" />
            </svg>
          </button>
        </div>
        <div className="flex gap-px *:flex *:h-[19px] *:w-8 *:items-center *:justify-center *:bg-[#393937]">
          <button aria-label="Play"><svg viewBox="0 0 12 12" className="size-3" fill="currentColor"><path d="M2 0l9 6-9 6z" /></svg></button>
          <button aria-label="Pause"><svg viewBox="0 0 12 12" className="size-3" fill="currentColor"><path d="M2 1h3v10H2zM7 1h3v10H7z" /></svg></button>
          <button aria-label="Step" className="text-[#a0a0a0]"><svg viewBox="0 0 12 12" className="size-3" fill="currentColor"><path d="M1 0l8 6-8 6zM9.500 0h2v12h-2z" /></svg></button>
        </div>
        <div className="flex justify-end gap-1.5 pr-2.5 *:h-[19px] *:rounded-[2px] *:bg-[#353533]">
          <button aria-label="Undo history" className="flex w-[30px] items-center justify-center"><History size={14} /></button>
          <button aria-label="Search" className="flex w-[30px] items-center justify-center"><Search size={13} /></button>
          <Dropdown label="Layers" value="Layers" className="w-[78px] px-[3px]" />
          <Dropdown label="Layout" value="Layout" className="w-[78px] px-[3px]" />
        </div>
      </div>

      <main className="grid min-h-0 flex-1 grid-cols-[1454fr_464fr] gap-x-0.5">
        <div className="grid min-h-0 min-w-0 grid-rows-[436fr_500fr] gap-y-px">
          <div className="grid min-h-0 grid-cols-[661fr_413fr_376fr] gap-x-0.5">
            <GameWindow />
            <SceneWindow />
            <HierarchyWindow />
          </div>
          <div className="grid min-h-0 grid-cols-[740fr_712fr] gap-x-0.5">
            <ConsoleWindow />
            <ProjectWindow />
          </div>
        </div>
        <InspectorWindow />
      </main>

      <div className="flex h-[22px] shrink-0 items-center justify-end gap-3 bg-[#181818] pr-[7px]">
        <BugOff size={14} fill="currentColor" />
        <svg viewBox="0 0 16 16" className="size-3.5">
          <ellipse cx="8" cy="4" rx="7" ry="3.500" fill="#c8c8ca" />
          <path d="M1 7c3 3 11 3 14 0v3c-3 3-11 3-14 0zM1 12c3 2.500 11 2.500 14 0v2c-3 2-11 2-14 0z" fill="#c8c8ca" />
          <path d="M1 2l14 13" stroke="#181818" strokeWidth="1.500" />
        </svg>
        <svg viewBox="0 0 16 16" className="size-3.5" fill="none" stroke="#c8c8ca" strokeWidth="1.500">
          <path d="M3 4a6.500 6.500 0 0 1 11 3M13 12A6.500 6.500 0 0 1 2 9M1 1l14 14" />
          <circle cx="8" cy="8" r="2.500" fill="#c8c8ca" />
        </svg>
        <CircleCheck size={15} />
      </div>
      <Taskbar />
    </div>
  )
}
